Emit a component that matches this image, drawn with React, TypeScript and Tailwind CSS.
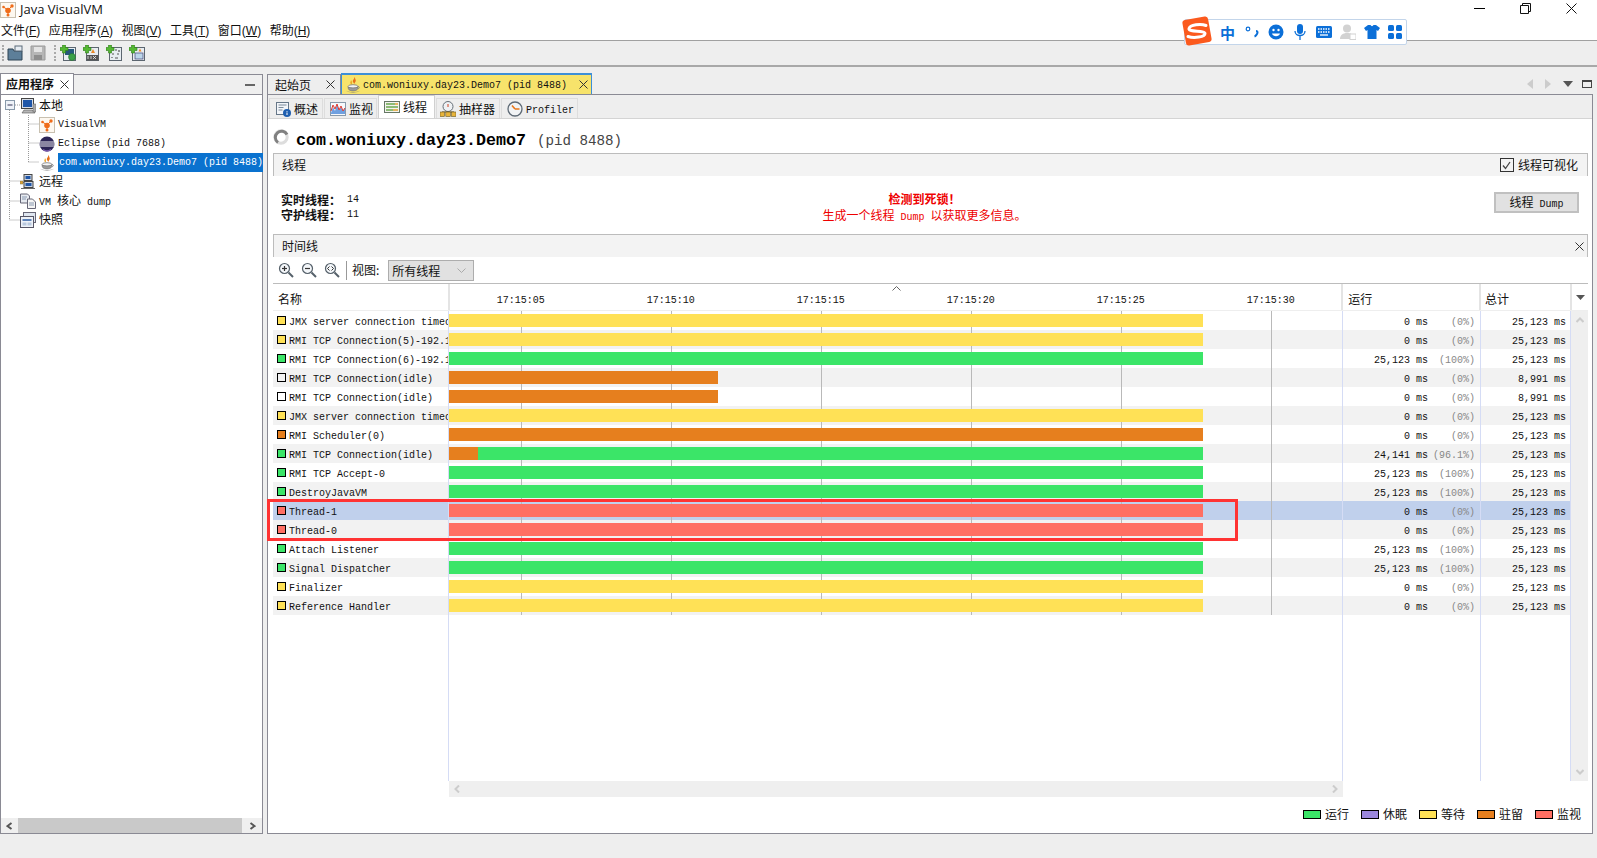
import type { ReactNode } from "react";

const GREEN = "#3be568";
const YELLOW = "#ffe156";
const ORANGE = "#e67f1e";
const RED = "#ff6f63";

const FULL = 754;
const GRID = [72, 222, 372, 522, 672, 822];
const TICKS = ["17:15:05", "17:15:10", "17:15:15", "17:15:20", "17:15:25", "17:15:30"];

type Row = {
  name: string;
  square: string;
  bars: [string, number][];
  run: string;
  pct: string;
  total: string;
};

const ROWS: Row[] = [
  { name: "JMX server connection timeout 17", square: YELLOW, bars: [[YELLOW, FULL]], run: "0", pct: "(0%)", total: "25,123" },
  { name: "RMI TCP Connection(5)-192.168.1.1", square: YELLOW, bars: [[YELLOW, FULL]], run: "0", pct: "(0%)", total: "25,123" },
  { name: "RMI TCP Connection(6)-192.168.1.1", square: GREEN, bars: [[GREEN, FULL]], run: "25,123", pct: "(100%)", total: "25,123" },
  { name: "RMI TCP Connection(idle)", square: "transparent", bars: [[ORANGE, 269]], run: "0", pct: "(0%)", total: "8,991" },
  { name: "RMI TCP Connection(idle)", square: "transparent", bars: [[ORANGE, 269]], run: "0", pct: "(0%)", total: "8,991" },
  { name: "JMX server connection timeout 18", square: YELLOW, bars: [[YELLOW, FULL]], run: "0", pct: "(0%)", total: "25,123" },
  { name: "RMI Scheduler(0)", square: ORANGE, bars: [[ORANGE, FULL]], run: "0", pct: "(0%)", total: "25,123" },
  { name: "RMI TCP Connection(idle)", square: GREEN, bars: [[ORANGE, 29], [GREEN, FULL - 29]], run: "24,141", pct: "(96.1%)", total: "25,123" },
  { name: "RMI TCP Accept-0", square: GREEN, bars: [[GREEN, FULL]], run: "25,123", pct: "(100%)", total: "25,123" },
  { name: "DestroyJavaVM", square: GREEN, bars: [[GREEN, FULL]], run: "25,123", pct: "(100%)", total: "25,123" },
  { name: "Thread-1", square: RED, bars: [[RED, FULL]], run: "0", pct: "(0%)", total: "25,123" },
  { name: "Thread-0", square: RED, bars: [[RED, FULL]], run: "0", pct: "(0%)", total: "25,123" },
  { name: "Attach Listener", square: GREEN, bars: [[GREEN, FULL]], run: "25,123", pct: "(100%)", total: "25,123" },
  { name: "Signal Dispatcher", square: GREEN, bars: [[GREEN, FULL]], run: "25,123", pct: "(100%)", total: "25,123" },
  { name: "Finalizer", square: YELLOW, bars: [[YELLOW, FULL]], run: "0", pct: "(0%)", total: "25,123" },
  { name: "Reference Handler", square: YELLOW, bars: [[YELLOW, FULL]], run: "0", pct: "(0%)", total: "25,123" },
];

const LEGEND = [
  { label: "运行", color: GREEN },
  { label: "休眠", color: "#9b87dc" },
  { label: "等待", color: YELLOW },
  { label: "驻留", color: ORANGE },
  { label: "监视", color: RED },
];

// latin is 6px wide per char like the bitmap font, cjk stays 12px
function Mixed({ text, className = "" }: { text: string; className?: string }) {
  const parts = text.split(/([^\x00-\x7f]+)/).filter(Boolean);
  return (
    <span className={`whitespace-pre font-['Liberation_Mono',monospace] text-[10px] ${className}`}>
      {parts.map((p, i) =>
        /[^\x00-\x7f]/.test(p) ? (
          <span key={i} className="font-['Noto_Sans_CJK_SC',sans-serif] text-[12px]">
            {p}
          </span>
        ) : (
          <span key={i}>{p}</span>
        ),
      )}
    </span>
  );
}

function Icon({ children, size = 16 }: { children: ReactNode; size?: number }) {
  return (
    <svg width={size} height={size} viewBox="0 0 16 16" className="shrink-0" aria-hidden="true">
      {children}
    </svg>
  );
}

const JavaIcon = () => (
  <Icon>
    <path d="M9 0c1 2-2 3-1 5 .5 1 1 1 1.500 2-.1-1.500 2-2.500 1-4.500C10.200 1.500 10 .8 9 0z" fill="#e8701a" />
    <path d="M6 3c0 1.500-1 2-.5 3.500L7 7.500C6.500 6 7.500 5 6 3z" fill="#e8a01a" />
    <ellipse cx="8" cy="9.500" rx="5" ry="1.800" fill="#f4f4f4" stroke="#777" strokeWidth=".8" />
    <path d="M3 10c0 3 2 4 5 4s5-1 5-4c-1.500 1.200-8.500 1.200-10 0z" fill="#9a9a9a" stroke="#666" strokeWidth=".5" />
    <path d="M1 13.500c2 2 12 2 14 0-1 2.500-13 2.500-14 0z" fill="#777" />
    <path d="M12.500 9.500c2-.5 2.500 1.500.5 2.500" fill="none" stroke="#777" strokeWidth=".8" />
  </Icon>
);

const VmIcon = () => (
  <Icon>
    <rect x=".5" y=".5" width="15" height="15" fill="#fdf8f0" stroke="#c8c0b0" />
    <circle cx="8" cy="8.500" r="2.800" fill="#ef6c1a" />
    <circle cx="8" cy="13" r="1.500" fill="#ef6c1a" />
    <circle cx="12" cy="4" r="1.700" fill="#ef6c1a" />
    <circle cx="3.500" cy="5" r="1.300" fill="#ef6c1a" />
    <path d="M8 8l4-4M8 8 3.500 5M8 8v5" stroke="#ef6c1a" strokeWidth="1" />
  </Icon>
);

const EclipseIcon = () => (
  <Icon>
    <circle cx="8" cy="8" r="7.500" fill="#2c2455" />
    <path d="M1 6h14M.5 8h15M1 10h14" stroke="#fff" strokeWidth=".9" />
    <path d="M4 13.500a7 7 0 0 0 8 0" stroke="#7a5bb0" strokeWidth="1.500" fill="none" />
  </Icon>
);

const ComputerIcon = () => (
  <Icon>
    <rect x="1.500" y=".5" width="12" height="10" fill="#d8dde6" stroke="#444" />
    <rect x="3" y="2" width="9" height="7" fill="#1f56a8" />
    <path d="M4 12h8l3 3H2z" fill="#b5b5b5" stroke="#555" strokeWidth=".6" />
    <rect x="13" y="6" width="3" height="8" fill="#aaa" stroke="#666" strokeWidth=".5" />
  </Icon>
);

const RemoteIcon = () => (
  <Icon>
    <rect x="4" y=".5" width="8" height="6" fill="#cfd6e2" stroke="#444" />
    <rect x="5.500" y="2" width="5" height="3" fill="#1f56a8" />
    <rect x="4" y="7.500" width="9" height="6" fill="#cfd6e2" stroke="#444" />
    <rect x="5.500" y="9" width="6" height="3" fill="#1f56a8" />
    <rect x="0" y="7" width="3" height="3" fill="#e0a030" stroke="#775" strokeWidth=".5" />
    <path d="M3 8.500h1M1 14.500h14" stroke="#666" />
  </Icon>
);

const DumpIcon = () => (
  <Icon>
    <path d="M.5 1h7l2 2v7h-9z" fill="#e6eaf0" stroke="#667" />
    <path d="M7.500 6h5l3 3v6.500h-8z" fill="#f5f5f5" stroke="#667" />
    <path d="M2 4h5M2 6h4M9 10h5M9 12h5" stroke="#8898b0" />
  </Icon>
);

const SnapshotIcon = () => (
  <Icon>
    <rect x="3.500" y=".5" width="12" height="10" fill="#dfe6f0" stroke="#667" />
    <rect x=".5" y="4.500" width="13" height="11" fill="#eef2f8" stroke="#556" />
    <rect x="2.500" y="7" width="9" height="2" fill="#5a80b8" />
    <rect x="2.500" y="10.500" width="4" height="3" fill="#b8c8de" />
    <rect x="7.500" y="10.500" width="4" height="3" fill="#b8c8de" />
  </Icon>
);

const Plus = () => (
  <path d="M2.500 0h3v2.500H8v3H5.500V8h-3V5.500H0v-3h2.500z" fill="#55b833" stroke="#2d7a1a" strokeWidth=".6" />
);

function ToolIcon({ kind }: { kind: number }) {
  return (
    <Icon>
      <rect x="3.500" y="2.500" width="12" height="13" fill="#e8edf2" stroke="#5c6670" />
      {kind === 0 && (
        <>
          <rect x="5" y="4" width="9" height="6" fill="#25587a" />
          <circle cx="12" cy="12" r="3.500" fill="#3aa047" stroke="#1f6a2b" strokeWidth=".5" />
        </>
      )}
      {kind === 1 && (
        <>
          <path d="M10 4l-2 4h4z" fill="#e8892a" />
          <rect x="3.500" y="10" width="12" height="5.500" fill="#555" />
          <path d="M5 11v3M8 11v3M10 11l3 3M13 11l-3 3" stroke="#eee" strokeWidth=".8" />
        </>
      )}
      {kind === 2 && <path d="M9 5h2M13 5v2M6 9h2M11 9h2M6 13v-1M9 13h3" stroke="#555" strokeWidth="1.200" />}
      {kind === 3 && (
        <>
          <path d="M11 3.500l-1.500 3h3z" fill="#e8892a" />
          <rect x="6" y="8" width="8" height="6" fill="#bcd6ea" stroke="#447" strokeWidth=".7" />
        </>
      )}
      <Plus />
    </Icon>
  );
}

function Grip() {
  return <div className="h-[16px] w-[3px] border-l-2 border-dotted border-[#aaaaaa]" />;
}

function CloseX({ className = "" }: { className?: string }) {
  return (
    <svg width="9" height="9" viewBox="0 0 9 9" className={`shrink-0 ${className}`} aria-hidden="true">
      <path d="M.5.5l8 8M8.500.5l-8 8" stroke="#333" strokeWidth="1" />
    </svg>
  );
}

function SubTab({
  label,
  icon,
  active,
  w,
  pad = "pl-[5px]",
}: {
  label: ReactNode;
  icon: ReactNode;
  active?: boolean;
  w: string;
  pad?: string;
}) {
  return (
    <div
      className={`flex items-center gap-[3px] border border-b-0 ${pad} ${w} ${
        active ? "h-[23px] border-[#d0d0d0] bg-white" : "h-[20px] border-[#dddddd] bg-[#eeeeee]"
      }`}
    >
      {icon}
      {label}
    </div>
  );
}

function SectionHeader({ children }: { children: ReactNode }) {
  return (
    <div className="flex h-[23px] items-center justify-between border-x border-t border-[#bcbcbc] border-b-0 bg-[#f3f3f3] pl-[8px] pr-[4px] text-[12px] leading-none">
      {children}
    </div>
  );
}

function Magnifier({ sign }: { sign: "+" | "-" | "o" }) {
  return (
    <Icon>
      <circle cx="6.500" cy="6.500" r="5" fill="#f4f7fa" stroke="#55606a" strokeWidth="1.200" />
      <path d="M10.500 10.500l4.500 4.500" stroke="#55606a" strokeWidth="2" />
      {sign !== "o" && <path d="M4 6.500h5" stroke="#333" strokeWidth="1.200" />}
      {sign === "+" && <path d="M6.500 4v5" stroke="#333" strokeWidth="1.200" />}
      {sign === "o" && <path d="M5.500 4.500l-2 2 2 2M7.500 4.500l2 2-2 2" fill="none" stroke="#333" />}
    </Icon>
  );
}

function ThreadRow({ row, index }: { row: Row; index: number }) {
  const selected = index === 10;
  const bg = selected ? "bg-[#c0d0ec]" : index % 2 === 1 ? "bg-[#f2f2f2]" : "bg-white";
  return (
    <div className={`flex h-[19px] ${bg}`}>
      <div className="flex w-[175px] shrink-0 items-center gap-[3px] overflow-hidden pl-[4px]">
        <span className="h-[9px] w-[9px] shrink-0 border border-black" style={{ backgroundColor: row.square }} />
        <Mixed text={row.name} className="translate-y-[2px] leading-[19px] text-[#111111]" />
      </div>
      <div className="w-px shrink-0 bg-[#d5dcf5]" />
      <div className="relative w-[893px] shrink-0">
        {GRID.map((x) => (
          <div key={x} className="absolute inset-y-0 w-px bg-[#b9b9b9]" style={{ left: x }} />
        ))}
        <div className="relative flex h-[13px] translate-y-[3px]">
          {row.bars.map(([color, w], i) => (
            <div key={i} style={{ width: w, backgroundColor: color }} />
          ))}
        </div>
      </div>
      <div className="w-px shrink-0 bg-[#d5dcf5]" />
      <div className="flex w-[137px] shrink-0 items-center justify-end pr-[5px] pt-[4px]">
        <Mixed text={`${row.run} ms`} className="text-[#111111]" />
        <Mixed text={row.pct} className="w-[47px] text-right text-[#888888]" />
      </div>
      <div className="w-px shrink-0 bg-[#d5dcf5]" />
      <div className="flex w-[89px] shrink-0 items-center justify-end pr-[4px] pt-[4px]">
        <Mixed text={`${row.total} ms`} className="text-[#111111]" />
      </div>
      <div className="w-px shrink-0 bg-[#d5dcf5]" />
    </div>
  );
}

function SogouBar() {
  return (
    <div className="absolute left-[1184px] top-[19px] z-20 flex h-[26px] w-[223px] items-center gap-[8px] rounded-[2px] border border-[#c3d5ea] bg-white pl-[35px]">
      <svg width="32" height="32" viewBox="0 0 32 32" className="absolute -left-[4px] -top-[5px]" aria-hidden="true">
        <rect x="3" y="3" width="26" height="26" rx="3" fill="#fb5a1e" transform="rotate(-10 16 16)" />
        <path d="M25 10.500C20 8.500 9 9.500 8 13.500s16 1.500 16 5-11 5-17 3" fill="none" stroke="#fff" strokeWidth="3" strokeLinecap="round" />
      </svg>
      <span className="w-[16px] font-['Noto_Sans_CJK_SC',sans-serif] text-[15px] font-bold leading-none text-[#0b6fd8]">中</span>
      <svg width="16" height="16" viewBox="0 0 16 16" aria-hidden="true">
        <circle cx="4" cy="5" r="1.800" fill="none" stroke="#0b6fd8" strokeWidth="1.200" />
        <path d="M12 7c1 0 1.500.5 1.500 1.500S12 12 10.500 12.500" fill="none" stroke="#0b6fd8" strokeWidth="2" />
      </svg>
      <svg width="16" height="16" viewBox="0 0 16 16" aria-hidden="true">
        <circle cx="8" cy="8" r="7.500" fill="#0b6fd8" />
        <circle cx="5.500" cy="6" r="1.200" fill="#fff" />
        <circle cx="10.500" cy="6" r="1.200" fill="#fff" />
        <path d="M4 9.500c1 3.500 7 3.500 8 0z" fill="#fff" />
      </svg>
      <svg width="16" height="16" viewBox="0 0 16 16" aria-hidden="true">
        <rect x="5" y="0" width="6" height="10" rx="3" fill="#0b6fd8" />
        <path d="M3 7c0 6 10 6 10 0M8 12v4" fill="none" stroke="#0b6fd8" strokeWidth="1.300" />
      </svg>
      <svg width="16" height="16" viewBox="0 0 16 16" aria-hidden="true">
        <rect x="0" y="2" width="16" height="12" rx="1.500" fill="#0b6fd8" />
        <path d="M2 5h12M2 8h12" stroke="#fff" strokeWidth="1.300" strokeDasharray="1.500 1" />
        <path d="M4 11h8" stroke="#fff" strokeWidth="1.300" />
      </svg>
      <svg width="16" height="16" viewBox="0 0 16 16" aria-hidden="true">
        <circle cx="7" cy="4.500" r="4" fill="#d2d2d2" />
        <path d="M0 15c0-4 3-6 7-6s5 1 5 2v4z" fill="#d2d2d2" />
        <rect x="10" y="10" width="6" height="5.500" fill="#fff" stroke="#d2d2d2" />
      </svg>
      <svg width="16" height="16" viewBox="0 0 16 16" aria-hidden="true">
        <path d="M4 1h2.500c.5 1.500 2.500 1.500 3 0H12l4 3-2 3-1.500-1v9h-9V6L2 7 0 4z" fill="#0b6fd8" />
      </svg>
      <svg width="14" height="14" viewBox="0 0 14 14" aria-hidden="true">
        <rect x="0" y="0" width="6" height="6" rx="1.500" fill="#0b6fd8" />
        <rect x="8" y="0" width="6" height="6" rx="1.500" fill="#0b6fd8" />
        <rect x="0" y="8" width="6" height="6" rx="1.500" fill="#0b6fd8" />
        <rect x="8" y="8" width="6" height="6" rx="1.500" fill="#0b6fd8" />
      </svg>
    </div>
  );
}

function TreeRow({ icon, label, child, selected }: { icon: ReactNode; label: ReactNode; child?: boolean; selected?: boolean }) {
  return (
    <div className={`flex h-[19px] items-center ${child ? "pl-[38px]" : "pl-[19px]"}`}>
      {icon}
      <div className={`ml-[3px] flex h-[19px] flex-1 items-center ${selected ? "bg-[#0a72cf] text-white" : "text-[#111111]"}`}>
        {label}
      </div>
    </div>
  );
}

function AppPanel() {
  return (
    <div className="flex h-[761px] w-[263px] shrink-0 flex-col">
      <div className="flex h-[21px] items-end">
        <div className="flex h-[21px] w-[74px] items-center gap-[6px] border-x border-t border-[#8a8a94] bg-white pl-[5px] font-['Noto_Sans_CJK_SC',sans-serif] text-[12px] font-bold leading-none">
          应用程序
          <CloseX />
        </div>
        <div className="flex h-[20px] flex-1 items-center justify-end border-t border-r border-[#8a8a94] bg-[#efefef] pr-[7px]">
          <div className="h-[2px] w-[10px] bg-[#666666]" />
        </div>
      </div>
      <div className="relative flex flex-1 flex-col border-x border-b border-t border-[#8a8a94] bg-white">
        <svg width="60" height="135" className="absolute left-0 top-0" aria-hidden="true">
          <path d="M8.500 15V124M8.500 125H19M8.500 86H19M8.500 106H19M14 10H19M27.500 20V67M27.500 29H38M27.500 48H38M27.500 67H38" stroke="#999" strokeDasharray="1 1" fill="none" />
          <rect x="4.500" y="5.500" width="9" height="9" fill="#eef2f8" stroke="#8899aa" />
          <path d="M6.500 10h5" stroke="#335" />
        </svg>
        <div className="relative pt-[1px]">
          <TreeRow icon={<ComputerIcon />} label={<Mixed text="本地" />} />
          <TreeRow child icon={<VmIcon />} label={<Mixed text="VisualVM" />} />
          <TreeRow child icon={<EclipseIcon />} label={<Mixed text="Eclipse (pid 7688)" />} />
          <TreeRow child selected icon={<JavaIcon />} label={<Mixed text="com.woniuxy.day23.Demo7 (pid 8488)" className="pl-[1px]" />} />
          <TreeRow icon={<RemoteIcon />} label={<Mixed text="远程" />} />
          <TreeRow icon={<DumpIcon />} label={<Mixed text="VM 核心 dump" />} />
          <TreeRow icon={<SnapshotIcon />} label={<Mixed text="快照" />} />
        </div>
        <div className="mt-auto flex h-[15px] items-center bg-[#efefef]">
          <div className="flex w-[17px] justify-center">
            <svg width="7" height="8" viewBox="0 0 7 8" aria-hidden="true"><path d="M5.500 1l-4 3 4 3" fill="none" stroke="#555" strokeWidth="2" /></svg>
          </div>
          <div className="h-[15px] flex-1 bg-[#c9c9c9]" />
          <div className="flex w-[20px] justify-center">
            <svg width="7" height="8" viewBox="0 0 7 8" aria-hidden="true"><path d="M1.500 1l4 3-4 3" fill="none" stroke="#555" strokeWidth="2" /></svg>
          </div>
        </div>
      </div>
    </div>
  );
}

function TabStrip() {
  return (
    <div className="flex h-[21px] items-end">
      <div className="flex h-[20px] w-[74px] items-center justify-between border-x border-t border-[#8a8a94] bg-[#eeeeee] pl-[7px] pr-[5px] font-['Noto_Sans_CJK_SC',sans-serif] text-[12px] leading-none">
        起始页
        <CloseX />
      </div>
      <div className="flex h-[21px] w-[251px] items-center border border-b-0 border-t-2 border-[#3d8fd8] border-t-[#3d8fd8] bg-[#f7e36b] pl-[3px] pr-[3px]">
        <JavaIcon />
        <Mixed text="com.woniuxy.day23.Demo7 (pid 8488)" className="ml-[2px] flex-1 translate-y-[1px]" />
        <CloseX />
      </div>
      <div className="flex h-[20px] flex-1 items-center justify-end gap-[8px] pr-[1px]">
        <svg width="6" height="10" viewBox="0 0 6 10" aria-hidden="true"><path d="M6 0v10L0 5z" fill="#cccccc" /></svg>
        <svg width="6" height="10" viewBox="0 0 6 10" className="ml-[4px]" aria-hidden="true"><path d="M0 0v10l6-5z" fill="#cccccc" /></svg>
        <svg width="10" height="6" viewBox="0 0 10 6" className="ml-[4px]" aria-hidden="true"><path d="M0 0h10L5 6z" fill="#555555" /></svg>
        <div className="ml-[1px] h-[8px] w-[10px] border border-t-2 border-[#444444]" />
      </div>
    </div>
  );
}

function SubTabs() {
  const cjk = "font-['Noto_Sans_CJK_SC',sans-serif] text-[12px] leading-none";
  return (
    <div className="flex h-[24px] items-end gap-[1px] border-b border-[#d4d4d4] bg-[#eeeeee] pl-[1px]">
      <SubTab
        w="w-[54px]"
        label={<span className={cjk}>概述</span>}
        icon={
          <Icon>
            <rect x="1.500" y="1.500" width="12" height="12" fill="#f2f5f9" stroke="#667788" />
            <path d="M3.500 4h8M3.500 6.500h5M3.500 9h4" stroke="#7a8a9a" />
            <circle cx="12" cy="12" r="4" fill="#1f5fb0" />
            <path d="M12 10v.8M12 11.500V14" stroke="#fff" />
          </Icon>
        }
      />
      <SubTab
        w="w-[53px]"
        label={<span className={cjk}>监视</span>}
        icon={
          <Icon>
            <rect x=".5" y="1.500" width="15" height="13" fill="#f6f8fb" stroke="#8899aa" />
            <path d="M1 12l2-6 2 4 2-7 2 6 2-3 2 4 2-3v6H1z" fill="#6fa0e0" />
            <path d="M1 10l2-6 2 4 2-5 2 6 2-4 2 5 2-3" fill="none" stroke="#e03b30" />
          </Icon>
        }
      />
      <SubTab
        active
        w="w-[57px]"
        label={<span className={cjk}>线程</span>}
        icon={
          <Icon>
            <rect x=".5" y="2.500" width="15" height="11" fill="#f4f4ee" stroke="#667766" />
            <path d="M2 5h9M2 8h12M2 11h7" stroke="#6aa84f" strokeWidth="1.300" />
            <path d="M11 5h3M9 11h5" stroke="#e0a030" strokeWidth="1.300" />
          </Icon>
        }
      />
      <SubTab
        w="w-[64px]"
        pad="pl-[3px]"
        label={<span className={cjk}>抽样器</span>}
        icon={
          <Icon>
            <circle cx="8" cy="5.500" r="5" fill="#eef1f4" stroke="#666f78" />
            <path d="M8 3v3" stroke="#d04020" />
            <path d="M2 11h12" stroke="#665520" />
            <rect x="0" y="11" width="4.500" height="4.500" fill="#e8b43a" stroke="#665520" strokeWidth=".6" />
            <rect x="5.800" y="11" width="4.500" height="4.500" fill="#e8b43a" stroke="#665520" strokeWidth=".6" />
            <rect x="11.500" y="11" width="4.500" height="4.500" fill="#e8b43a" stroke="#665520" strokeWidth=".6" />
          </Icon>
        }
      />
      <SubTab
        w="w-[77px]"
        label={<Mixed text="Profiler" className="translate-y-[2px] leading-none" />}
        icon={
          <Icon>
            <circle cx="8" cy="8" r="7" fill="#f1f3f5" stroke="#5e6a76" strokeWidth="1.300" />
            <path d="M8 8l-3-3.500M8 8h4.500" stroke="#e8771a" strokeWidth="1.600" />
          </Icon>
        }
      />
    </div>
  );
}

function TimelineTable() {
  return (
    <div className="relative flex h-[498px] flex-col border-t border-[#bcbcbc]">
      <svg width="9" height="5" viewBox="0 0 9 5" className="absolute left-[619px] top-[2px]" aria-hidden="true">
        <path d="M.5 4.500l4-4 4 4" fill="none" stroke="#666666" />
      </svg>
      <div className="flex h-[27px] shrink-0 items-stretch border-b border-[#eeeeee] font-['Noto_Sans_CJK_SC',sans-serif] text-[12px]">
        <div className="flex w-[175px] items-center pl-[5px] pt-[3px]">名称</div>
        <div className="w-[2px] bg-[#e4e4e4]" />
        <div className="flex w-[892px] items-center overflow-hidden pt-[7px]">
          {TICKS.map((t, i) => (
            <span
              key={t}
              className={`w-[150px] shrink-0 text-center font-['Liberation_Mono',monospace] text-[10px] text-[#111111] ${i === 0 ? "-ml-[4px]" : ""}`}
            >
              {t}
            </span>
          ))}
        </div>
        <div className="w-[2px] bg-[#e4e4e4]" />
        <div className="flex w-[136px] items-center pl-[5px] pt-[3px]">运行</div>
        <div className="w-[2px] bg-[#e4e4e4]" />
        <div className="flex w-[89px] items-center pl-[4px] pt-[3px]">总计</div>
        <div className="flex w-[18px] items-center justify-center border-l-2 border-[#e4e4e4]">
          <svg width="9" height="5" viewBox="0 0 9 5" aria-hidden="true"><path d="M0 0h9L4.500 5z" fill="#555555" /></svg>
        </div>
      </div>

      <div className="flex min-h-0 flex-1">
        <div className="flex w-[1298px] shrink-0 flex-col">
          {ROWS.map((row, i) => (
            <ThreadRow key={`${row.name}-${i}`} row={row} index={i} />
          ))}
          <div className="flex flex-1">
            <div className="w-[175px] shrink-0" />
            <div className="w-px shrink-0 bg-[#d5dcf5]" />
            <div className="w-[893px] shrink-0" />
            <div className="w-px shrink-0 bg-[#d5dcf5]" />
            <div className="w-[137px] shrink-0" />
            <div className="w-px shrink-0 bg-[#d5dcf5]" />
            <div className="w-[89px] shrink-0" />
            <div className="w-px shrink-0 bg-[#d5dcf5]" />
          </div>
        </div>
        <div className="flex w-[17px] shrink-0 flex-col items-center justify-between bg-[#efefef] py-[6px]">
          <svg width="8" height="6" viewBox="0 0 8 6" aria-hidden="true"><path d="M.5 5l3.500-3.500L7.500 5" fill="none" stroke="#cccccc" strokeWidth="2" /></svg>
          <svg width="8" height="6" viewBox="0 0 8 6" aria-hidden="true"><path d="M.5 1L4 4.500 7.500 1" fill="none" stroke="#cccccc" strokeWidth="2" /></svg>
        </div>
      </div>
    </div>
  );
}

export default function App() {
  return (
    <div className="relative flex h-[858px] w-[1597px] flex-col overflow-hidden bg-[#eeeeee] font-['Noto_Sans_CJK_SC',sans-serif] text-[#111111]">
      <div className="flex h-[20px] items-center bg-white">
        <VmIcon />
        <span className="ml-[4px] pb-[2px] font-['Open_Sans',sans-serif] text-[13px] leading-none">Java VisualVM</span>
        <div className="ml-auto flex items-center gap-[35px] pb-[4px] pr-[20px]">
          <div className="h-px w-[11px] bg-black" />
          <svg width="11" height="11" viewBox="0 0 11 11" aria-hidden="true">
            <path d="M.5 2.500h8v8h-8zM2.500 2.500v-2h8v8h-2" fill="none" stroke="#111" />
          </svg>
          <svg width="11" height="11" viewBox="0 0 11 11" aria-hidden="true">
            <path d="M.5.5l10 10M10.500.5l-10 10" stroke="#111" />
          </svg>
        </div>
      </div>

      <div className="flex h-[21px] items-center gap-[8.5px] border-b border-[#a0a0a0] bg-white pl-[1px] text-[12px] leading-none">
        {["文件|F", "应用程序|A", "视图|V", "工具|T", "窗口|W", "帮助|H"].map((m) => {
          const [label, key] = m.split("|");
          return (
            <span key={m} className="whitespace-nowrap">
              {label}
              <span className="font-['Liberation_Sans',sans-serif]">
                (<span className="underline">{key}</span>)
              </span>
            </span>
          );
        })}
      </div>

      <div className="flex h-[26px] items-center border-b-2 border-[#a8a8a8] pl-[2px]">
        <Grip />
        <div className="ml-[2px] flex gap-[7px]">
          <Icon>
            <path d="M1 4h5l1 2h8v9H1z" fill="#5d7f99" stroke="#2f4455" />
            <rect x="8" y="1" width="7" height="5" fill="#e6ecf2" stroke="#5a6a78" />
          </Icon>
          <Icon>
            <path d="M1 1h14v14H1z" fill="#b6b6b6" stroke="#9a9a9a" />
            <rect x="4" y="2" width="8" height="5" fill="#e4e4e4" />
            <rect x="4" y="10" width="8" height="5" fill="#8e8e8e" />
          </Icon>
        </div>
        <div className="ml-[8px]"><Grip /></div>
        <div className="ml-[3px] flex gap-[7px]">
          <ToolIcon kind={0} />
          <ToolIcon kind={1} />
          <ToolIcon kind={2} />
          <ToolIcon kind={3} />
        </div>
      </div>

      <div className="flex flex-1 items-start gap-[4px] pt-[6px]">
        <AppPanel />

        <div className="flex h-[761px] w-[1326px] shrink-0 flex-col">
          <TabStrip />
          <div className="flex flex-1 flex-col border border-[#8a8a94] bg-white">
            <SubTabs />
            <div className="flex flex-1 flex-col pl-[5px] pr-[4px]">
              <div className="flex h-[34px] items-center pt-[1px]">
                <svg width="16" height="16" viewBox="0 0 16 16" aria-hidden="true">
                  <circle cx="8" cy="8" r="6.200" fill="none" stroke="#dddddd" strokeWidth="3" />
                  <path d="M14 5.500A6.200 6.200 0 1 0 5 13.500" fill="none" stroke="#808080" strokeWidth="3" />
                </svg>
                <span className="ml-[7px] translate-y-[5px] whitespace-pre font-['Liberation_Mono',monospace] text-[16.67px] font-bold leading-none text-black">
                  com.woniuxy.day23.Demo7
                </span>
                <span className="ml-[11px] translate-y-[5px] whitespace-pre font-['Liberation_Mono',monospace] text-[14.2px] leading-none text-[#444444]">
                  (pid 8488)
                </span>
              </div>

              <SectionHeader>
                线程
                <label className="flex items-center gap-[4px] pr-[5px]">
                  <span className="flex h-[14px] w-[14px] items-center justify-center border border-[#333333]">
                    <svg width="11" height="11" viewBox="0 0 11 11" aria-hidden="true"><path d="M2 5.500l2.500 3L9 2" fill="none" stroke="#444" strokeWidth="1.300" /></svg>
                  </span>
                  线程可视化
                </label>
              </SectionHeader>

              <div className="flex h-[58px] items-center pl-[8px]">
                <div className="w-[200px] pt-[4px] text-[12px] leading-[15px]">
                  <div className="flex h-[15px] items-center"><b>实时线程：</b><Mixed text=" 14" /></div>
                  <div className="flex h-[15px] items-center"><b>守护线程：</b><Mixed text=" 11" /></div>
                </div>
                <div className="flex-1 pl-[73px] pt-[2px] text-center leading-[15px] text-[#ee0000]">
                  <div className="h-[15px] text-[12px] font-bold">检测到死锁！</div>
                  <div className="h-[15px]"><Mixed text="生成一个线程 Dump 以获取更多信息。" /></div>
                </div>
                <div className="flex w-[293px] justify-end pb-[6px] pr-[9px]">
                  <div className="flex h-[21px] w-[85px] items-center justify-center border-2 border-[#c0c0c0] bg-[#e1e1e1]">
                    <Mixed text="线程 Dump" />
                  </div>
                </div>
              </div>

              <SectionHeader>
                时间线
                <CloseX className="-mr-[1px]" />
              </SectionHeader>

              <div className="flex h-[26px] items-center pl-[5px]">
                <Magnifier sign="+" />
                <div className="ml-[7px]"><Magnifier sign="-" /></div>
                <div className="ml-[7px]"><Magnifier sign="o" /></div>
                <div className="ml-[6px] h-[19px] w-px bg-[#999999]" />
                <span className="ml-[5px] text-[12px] leading-none">视图:</span>
                <div className="ml-[9px] flex h-[21px] w-[86px] items-center justify-between border border-[#adadad] bg-[#e1e1e1] pl-[3px] pr-[7px] pt-[1px] text-[12px] leading-none">
                  所有线程
                  <svg width="9" height="5" viewBox="0 0 9 5" aria-hidden="true"><path d="M.5.5l4 4 4-4" fill="none" stroke="#aaaaaa" /></svg>
                </div>
              </div>

              <TimelineTable />

              <div className="ml-[176px] flex h-[16px] w-[894px] shrink-0 items-center justify-between bg-[#efefef] px-[5px]">
                <svg width="6" height="8" viewBox="0 0 6 8" aria-hidden="true"><path d="M5 .5L1.500 4 5 7.500" fill="none" stroke="#cccccc" strokeWidth="2" /></svg>
                <svg width="6" height="8" viewBox="0 0 6 8" aria-hidden="true"><path d="M1 .5L4.500 4 1 7.500" fill="none" stroke="#cccccc" strokeWidth="2" /></svg>
              </div>

              <div className="flex flex-1 items-center justify-end gap-[12px] pb-[2px] pr-[7px]">
                {LEGEND.map((l) => (
                  <div key={l.label} className="flex items-center gap-[4px] text-[12px] leading-none">
                    <span className="h-[9px] w-[18px] border border-black" style={{ backgroundColor: l.color }} />
                    {l.label}
                  </div>
                ))}
              </div>
            </div>
          </div>
        </div>
      </div>

      <SogouBar />
      <div className="pointer-events-none absolute left-[267px] top-[499px] z-10 h-[42px] w-[971px] border-[3px] border-[#ff3333]" />
    </div>
  );
}
